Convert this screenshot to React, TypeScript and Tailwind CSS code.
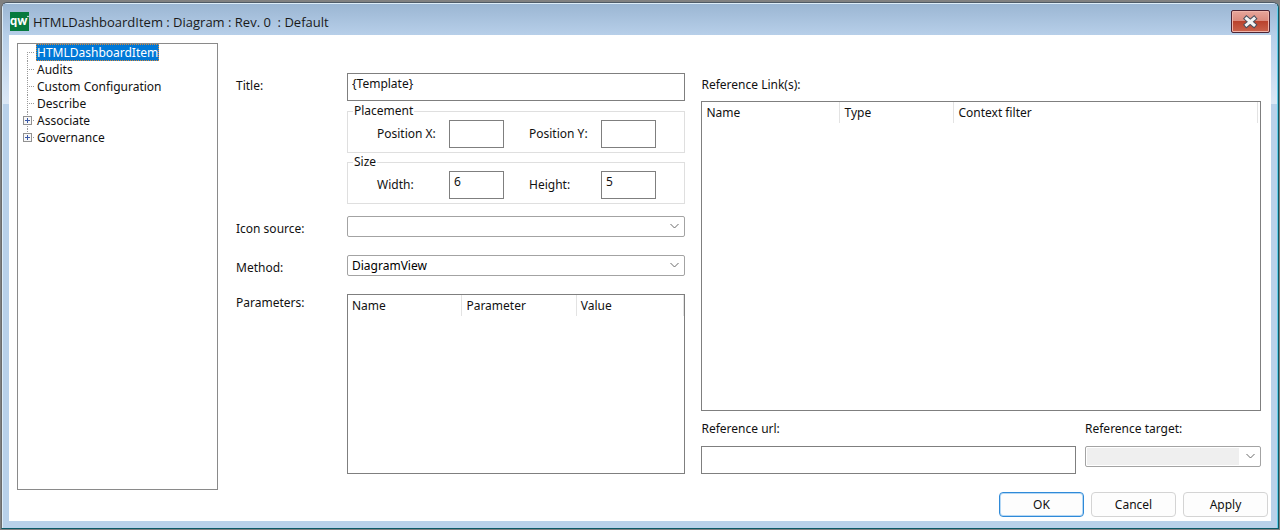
import type { ReactNode } from "react";

const treeItems = [
  { name: "HTMLDashboardItem", selected: true },
  { name: "Audits" },
  { name: "Custom Configuration" },
  { name: "Describe" },
  { name: "Associate", expandable: true },
  { name: "Governance", expandable: true },
];

function TreeBranch({ first, last, expandable }: { first: boolean; last: boolean; expandable?: boolean }) {
  return (
    <svg width="18" height="17" viewBox="0 0 18 17" shapeRendering="crispEdges" aria-hidden="true">
      <path
        d={`M9.5 ${first ? 8 : 0}V${last ? 8 : 17}M9 8.5H16`}
        stroke="#9a9a9a"
        strokeDasharray="1 1"
        fill="none"
      />
      {expandable && (
        <>
          <rect x="5.5" y="4.5" width="8" height="8" fill="#f8f8f8" stroke="#919191" />
          <path d="M7 8.5H12M9.5 6V11" stroke="#3c5aa8" fill="none" />
        </>
      )}
    </svg>
  );
}

function Tree() {
  return (
    <nav aria-label="Sections" className="w-[201px] shrink-0 border border-[#8a8a8a] bg-white">
      <ul>
        {treeItems.map((item, i) => (
          <li key={item.name} className="flex h-[17px] items-center">
            <TreeBranch first={i === 0} last={i === treeItems.length - 1} expandable={item.expandable} />
            <button
              type="button"
              className={
                item.selected
                  ? "h-[17px] border border-dotted border-[#d98a3a] bg-[#0078d7] leading-[15px] text-white"
                  : "h-[17px] border border-transparent leading-[15px]"
              }
            >
              {item.name}
            </button>
          </li>
        ))}
      </ul>
    </nav>
  );
}

function Row({ label, id, children }: { label: string; id: string; children: ReactNode }) {
  return (
    <div className="flex items-start">
      <label htmlFor={id} className="w-[111px] shrink-0 pt-[5px] leading-4">
        {label}
      </label>
      <div className="min-w-0 flex-1">{children}</div>
    </div>
  );
}

function TextBox({ id, value }: { id: string; value?: string }) {
  return (
    <input
      id={id}
      type="text"
      defaultValue={value}
      className="block h-7 w-full min-w-0 border border-[#7f7f7f] bg-white px-1 pb-2 outline-none"
    />
  );
}

function SelectBox({ id, options, disabled }: { id: string; options: string[]; disabled?: boolean }) {
  return (
    <div className="relative rounded-xs border border-[#a3a3a3] bg-white p-px">
      <select
        id={id}
        disabled={disabled}
        className="block h-[17px] w-full appearance-none bg-white pl-[3px] leading-[17px] text-black opacity-100 outline-none disabled:w-[calc(100%-20px)] disabled:bg-[#efefef]"
      >
        {options.map((o) => (
          <option key={o}>{o}</option>
        ))}
      </select>
      <svg
        className="pointer-events-none absolute top-[6px] right-[5px]"
        width="9"
        height="7"
        viewBox="0 0 9 7"
        fill="none"
        stroke="#6a6a6a"
        aria-hidden="true"
      >
        <path d="M0.5 1L4.5 5L8.5 1" />
      </svg>
    </div>
  );
}

function Group({ title, fields }: { title: string; fields: { id: string; label: string; value?: string }[] }) {
  return (
    <fieldset className="ml-[111px] border border-[#dfdfdf] pt-px pb-1 pl-[29px]">
      <legend className="-ml-6 h-4 px-px leading-4">{title}</legend>
      <div className="flex gap-[25px]">
        {fields.map((f) => (
          <div key={f.id} className="flex items-center">
            <label htmlFor={f.id} className="w-[72px] leading-4">
              {f.label}
            </label>
            <div className="w-[55px]">
              <TextBox id={f.id} value={f.value} />
            </div>
          </div>
        ))}
      </div>
    </fieldset>
  );
}

function ListTable({ id, label, columns }: { id: string; label: string; columns: { name: string; width: string }[] }) {
  return (
    <table id={id} aria-label={label} className="w-full table-fixed border-separate border-spacing-0">
      <thead>
        <tr>
          {columns.map((c) => (
            <th
              key={c.name}
              scope="col"
              className={`${c.width} border-r border-[#e3e3e3] p-0 pt-px pl-1 text-left leading-5 font-normal`}
            >
              {c.name}
            </th>
          ))}
        </tr>
      </thead>
    </table>
  );
}

function TitleBar() {
  return (
    <header className="flex h-[31px] items-start bg-linear-to-b from-[#9bb6d3] to-[#b7cfe9] pr-[7px] pl-[7px]">
      <svg width="19" height="19" viewBox="0 0 19 19" className="mt-2 shrink-0" aria-hidden="true">
        <rect width="19" height="19" fill="#067a3e" />
        <text x="0" y="13" fontFamily="Lato" fontWeight="900" fontSize="12.5" fill="#fff">
          qw
        </text>
        <circle cx="18" cy="4.5" r="0.8" fill="#fff" />
      </svg>
      <h1 className="mt-2 ml-1 flex-1 font-['Open_Sans','Noto_Sans',sans-serif] text-[13px] leading-5 whitespace-pre text-[#1a1a1a]">
        {"HTMLDashboardItem : Diagram : Rev. 0  : Default"}
      </h1>
      <button
        type="button"
        aria-label="Close"
        className="mt-1.5 flex h-[23px] w-[39px] items-center justify-center rounded-xs border border-[#4c2434] bg-linear-to-b from-[#e7a79d] to-[#c9604b] shadow-[inset_0_0_0_1px_#f0b5aa]"
      >
        <span className="m-px flex h-[19px] w-full items-center justify-center bg-[linear-gradient(#e6a398_0%,#db8b7e_45%,#b8402b_46%,#c9604a_100%)]">
          <svg width="15" height="19" viewBox="0 0 15 19" aria-hidden="true">
            <path d="M3.5 6.5L11 13M11 6.5L3.5 13" stroke="#48505e" strokeWidth="5" strokeLinecap="square" />
            <path d="M3.5 6.5L11 13M11 6.5L3.5 13" stroke="#f3f3f3" strokeWidth="3" strokeLinecap="square" />
          </svg>
        </span>
      </button>
    </header>
  );
}

function PushButton({ children, primary }: { children: ReactNode; primary?: boolean }) {
  return (
    <button
      type={primary ? "submit" : "button"}
      className={
        primary
          ? "h-[25px] w-[85px] rounded border border-[#2f8ad8] bg-[#fdfdfd] shadow-[inset_0_0_0_1px_#b5d8f5]"
          : "h-[25px] w-[85px] rounded border border-[#d4d4d4] bg-[#fdfdfd]"
      }
    >
      {children}
    </button>
  );
}

export default function App() {
  return (
    <div className="flex min-h-screen flex-col bg-[#808080] pt-0.5 pr-px pb-px pl-px font-['Noto_Sans',sans-serif] text-xs text-[#111]">
      <div className="flex flex-1 flex-col rounded-t-md border border-t-[#4e5a66] border-r-[#0b5a68] border-b-[#0b5a68] border-l-[#6b6b6b] bg-[linear-gradient(#b7cfe9_0px,#b7cfe9_32px,#dbe7f5_101px,#b9d1ea_101px)]">
        <div className="flex flex-1 flex-col rounded-t-md border border-b-0 border-[#dcecf8] border-r-[#62cdea]">
          <TitleBar />
          <form
            className="mx-1.5 mb-[7px] flex flex-1 flex-col bg-white pt-2 pr-[3px] pb-1 pl-2"
            onSubmit={(e) => e.preventDefault()}
          >
            <div className="flex flex-1 pr-[7px]">
              <Tree />
              <section className="ml-[18px] flex min-w-0 flex-[449_1_0%] flex-col pt-[30px] pb-4">
                <Row label="Title:" id="title">
                  <TextBox id="title" value="{Template}" />
                </Row>
                <div className="mt-0.5 mb-3 flex flex-col gap-px">
                  <Group
                    title="Placement"
                    fields={[
                      { id: "pos-x", label: "Position X:" },
                      { id: "pos-y", label: "Position Y:" },
                    ]}
                  />
                  <Group
                    title="Size"
                    fields={[
                      { id: "width", label: "Width:", value: "6" },
                      { id: "height", label: "Height:", value: "5" },
                    ]}
                  />
                </div>
                <div className="mb-[18px] flex flex-col gap-[18px]">
                  <Row label="Icon source:" id="icon-source">
                    <SelectBox id="icon-source" options={[""]} />
                  </Row>
                  <Row label="Method:" id="method">
                    <SelectBox id="method" options={["DiagramView"]} />
                  </Row>
                </div>
                <div className="flex flex-1">
                  <span className="w-[111px] shrink-0 leading-[18px]">Parameters:</span>
                  <div className="min-h-[180px] min-w-0 flex-1 border border-[#7f7f7f] bg-white">
                    <ListTable
                      id="parameters"
                      label="Parameters"
                      columns={[
                        { name: "Name", width: "w-[34%]" },
                        { name: "Parameter", width: "w-[34%]" },
                        { name: "Value", width: "w-[32%]" },
                      ]}
                    />
                  </div>
                </div>
              </section>
              <section className="ml-4 flex min-w-0 flex-[559_1_0%] flex-col pt-[33px] pb-4">
                <span className="mb-[7px] leading-[18px]">Reference Link(s):</span>
                <div className="min-h-[200px] flex-1 border border-[#7f7f7f] bg-white pr-0.5">
                  <ListTable
                    id="reference-links"
                    label="Reference Link(s)"
                    columns={[
                      { name: "Name", width: "w-[138px]" },
                      { name: "Type", width: "w-[114px]" },
                      { name: "Context filter", width: "w-auto" },
                    ]}
                  />
                </div>
                <div className="mt-[9px] flex items-start gap-[9px]">
                  <div className="min-w-0 flex-1">
                    <label htmlFor="ref-url" className="mb-2 block leading-[18px]">
                      Reference url:
                    </label>
                    <TextBox id="ref-url" />
                  </div>
                  <div className="w-44">
                    <label htmlFor="ref-target" className="mb-2 block leading-[18px]">
                      Reference target:
                    </label>
                    <SelectBox id="ref-target" options={[""]} disabled />
                  </div>
                </div>
              </section>
            </div>
            <footer className="mt-0.5 flex justify-end gap-[7px]">
              <PushButton primary>OK</PushButton>
              <PushButton>Cancel</PushButton>
              <PushButton>Apply</PushButton>
            </footer>
          </form>
        </div>
      </div>
    </div>
  );
}
